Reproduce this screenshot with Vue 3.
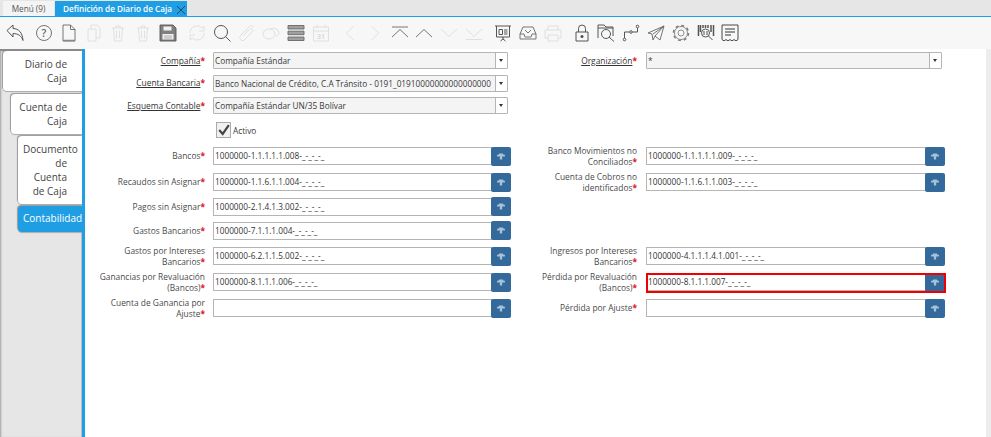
<script setup>
const rows = [
  {
    h: 26,
    left: { label: 'Bancos', value: '1000000-1.1.1.1.1.008-_-_-_-_' },
    right: { label: 'Banco Movimientos no Conciliados', value: '1000000-1.1.1.1.1.009-_-_-_-_' }
  },
  {
    h: 26,
    left: { label: 'Recaudos sin Asignar', value: '1000000-1.1.6.1.1.004-_-_-_-_' },
    right: { label: 'Cuenta de Cobros no identificados', value: '1000000-1.1.6.1.1.003-_-_-_-_' }
  },
  { h: 23, left: { label: 'Pagos sin Asignar', value: '1000000-2.1.4.1.3.002-_-_-_-_' } },
  { h: 25, left: { label: 'Gastos Bancarios', value: '1000000-7.1.1.1.004-_-_-_-_' } },
  {
    h: 26,
    left: { label: 'Gastos por Intereses Bancarios', value: '1000000-6.2.1.1.5.002-_-_-_-_' },
    right: { label: 'Ingresos por Intereses Bancarios', value: '1000000-4.1.1.1.4.1.001-_-_-_-_' }
  },
  {
    h: 26,
    left: { label: 'Ganancias por Revaluación (Bancos)', value: '1000000-8.1.1.1.006-_-_-_-_' },
    right: { label: 'Pérdida por Revaluación (Bancos)', value: '1000000-8.1.1.1.007-_-_-_-_', marked: true }
  },
  {
    h: 26,
    left: { label: 'Cuenta de Ganancia por Ajuste', value: '' },
    right: { label: 'Pérdida por Ajuste', value: '' }
  }
]
</script>

<template>
  <div class="page">
    <div class="tabs">
      <div class="tab">Menú (9)</div>
      <div class="tab active">
        Definición de Diario de Caja
        <svg class="close" viewBox="0 0 10 10"><path d="M1 1l8 8M9 1l-8 8" /></svg>
      </div>
    </div>

    <div class="toolbar">
      <div class="group">
        <svg class="ic strong" viewBox="0 0 18 18"><path d="M1 6.500L7 1v3.500c5.500 0 9.500 4 10 12-1.500-4.500-5-7-10-7V13z" /></svg>
      </div>
      <div class="group">
        <svg class="ic" viewBox="0 0 18 18"><circle cx="9" cy="9" r="7.500" /><text x="9" y="12.500" text-anchor="middle" class="q">?</text></svg>
        <svg class="ic" viewBox="0 0 18 18"><path d="M3 1h7.500L15 5.500V17H3z" /><path d="M10.500 1v4.500H15" /><path class="thick" d="M3 16.500h12" /></svg>
        <svg class="ic off" viewBox="0 0 18 18"><path d="M3 5h8v12H3zM6 5V1h6l3 3v10h-4" /></svg>
        <svg class="ic off" viewBox="0 0 18 18"><path d="M3 4h12M7 4V2h4v2M4.500 4l1 13h7l1-13M7.500 6.500v8M10.500 6.500v8" /></svg>
        <svg class="ic off" viewBox="0 0 18 18"><path d="M3 4h12M7 4V2h4v2M4.500 4l1 13h7l1-13M7.500 6.500v8M10.500 6.500v8" /></svg>
        <svg class="ic" viewBox="0 0 18 18"><path class="disk" d="M1 1h13l3 3v13H1z" /><path class="hole" d="M4.500 2.500h8v4h-8zM3.500 10h11v5.500h-11z" /><path class="thin" d="M5 12h8M5 14h8" /></svg>
      </div>
      <div class="group">
        <svg class="ic off" viewBox="0 0 18 18"><path d="M2 9a7 7 0 0 1 12-5l2-2v5h-5M16 9a7 7 0 0 1-12 5l-2 2v-5h5" /></svg>
        <svg class="ic strong" viewBox="0 0 18 18"><circle cx="8" cy="8" r="6.500" /><path d="M12.500 12.500l5 5" /></svg>
        <svg class="ic off" viewBox="0 0 18 18"><path d="M16 3c-2-2-4-1-5 0L3 11c-2 2-1 4 0 5s3 1 4-1l7-7c1-1 1-2 0-3s-2 0-3 1l-6 6" /></svg>
        <svg class="ic off" viewBox="0 0 18 18"><ellipse cx="7" cy="10" rx="6" ry="5" /><path d="M9 4.500a6 5 0 0 1 8 4c0 2-1 3-3 4" /></svg>
        <svg class="ic" viewBox="0 0 18 18"><path class="bar" d="M1 1.500h16v3.500H1zM1 7.200h16v3.500H1zM1 13h16v3.500H1z" /></svg>
        <svg class="ic off" viewBox="0 0 18 18"><path d="M1.500 3h15v14h-15zM1.500 7h15M5 1v3M13 1v3" /><text x="9" y="15" text-anchor="middle" class="cal">31</text></svg>
      </div>
      <div class="group">
        <svg class="ic off" viewBox="0 0 18 18"><path d="M12.500 2L5.500 9l7 7" /></svg>
        <svg class="ic off" viewBox="0 0 18 18"><path d="M5.500 2l7 7-7 7" /></svg>
        <svg class="ic" viewBox="0 0 18 18"><path d="M1 3h16M1 13l8-7.500L17 13" /></svg>
        <svg class="ic" viewBox="0 0 18 18"><path d="M1 13l8-7.500L17 13" /></svg>
        <svg class="ic off" viewBox="0 0 18 18"><path d="M1 5l8 7.500L17 5" /></svg>
        <svg class="ic off" viewBox="0 0 18 18"><path d="M1 5l8 7.500L17 5M1 15.500h16" /></svg>
      </div>
      <div class="group">
        <svg class="ic strong" viewBox="0 0 18 18"><path d="M1 2h16M2.500 2v11h13V2M9 13v2M6.500 17L9 15l2.500 2M5 5.500h3.500v5H5zM10 6h3.500M10 8h3.500M10 10h3.500" /></svg>
        <svg class="ic" viewBox="0 0 18 18"><path d="M4 3h10l3 7v5H1v-5zM1 10h4l1 3h6l1-3h4M6 6l3 3 3-3" /></svg>
        <svg class="ic off" viewBox="0 0 18 18"><path d="M4 6V2h10v4M4 14H1V6h16v8h-3M4 11h10v6H4z" /></svg>
      </div>
      <div class="group">
        <svg class="ic strong" viewBox="0 0 18 18"><path d="M3 8h12v9H3zM5.500 8V4.500a3.500 3.500 0 0 1 7 0V8" /><circle class="dot" cx="9" cy="12.500" r="1.500" /></svg>
        <svg class="ic strong" viewBox="0 0 18 18"><path d="M1 14V1h6l2 2h7v9M1 4h15" /><circle cx="9" cy="10" r="4.500" /><path d="M12 13l5 4.500" /></svg>
        <svg class="ic strong" viewBox="0 0 18 18"><circle cx="2.500" cy="15.500" r="1.300" /><circle cx="9" cy="8" r="1.300" /><circle cx="15.500" cy="2.500" r="1.300" /><path d="M2.500 14V8h5M10.500 8H15.500V4" /></svg>
        <svg class="ic" viewBox="0 0 18 18"><path d="M1 9l16-7-4 14-5-4-2 4-1-6zM6 10l11-8M8 12l9-10" /></svg>
        <svg class="ic gear" viewBox="0 0 18 18"><circle cx="9" cy="9" r="6.500" /><circle class="teeth" cx="9" cy="9" r="7.500" /><circle cx="9" cy="9" r="3" /></svg>
        <svg class="ic strong" viewBox="0 0 18 18"><path class="code" d="M1.500 1v11M3.500 1v7M6 1v3M8.500 1v3M11 1v3M14 1v7M16.500 1v11" /><circle cx="8.500" cy="9" r="4" /><path d="M7 7v4M10 7v4M11.500 12l4 4" /></svg>
        <svg class="ic dark" viewBox="0 0 18 18"><path d="M1 1h16v14.500c-1.500 1.500-2.500 1.500-4 0-1.500 1.500-2.500 1.500-4 0-1.500 1.500-2.500 1.500-4 0-1.500 1.500-2.500 1.500-4 0z" /><path class="lines" d="M4 5h10M4 8h10M4 11h6" /></svg>
      </div>
    </div>

    <div class="body">
      <div class="side">
        <div class="step s1">Diario de Caja</div>
        <div class="step s2">Cuenta de Caja</div>
        <div class="step s3">Documento de Cuenta de Caja</div>
        <div class="step s4">Contabilidad</div>
      </div>

      <div class="main">
        <div class="row r-select">
          <label class="lbl"><u>Compañía</u><i>*</i></label>
          <div class="select">Compañía Estándar<span class="arrow"></span></div>
          <label class="lbl"><u>Organización</u><i>*</i></label>
          <div class="select">*<span class="arrow"></span></div>
        </div>
        <div class="row r-select">
          <label class="lbl"><u>Cuenta Bancaria</u><i>*</i></label>
          <div class="select">Banco Nacional de Crédito, C.A Tránsito - 0191_01910000000000000000<span class="arrow"></span></div>
        </div>
        <div class="row r-select">
          <label class="lbl"><u>Esquema Contable</u><i>*</i></label>
          <div class="select">Compañía Estándar UN/35 Bolívar<span class="arrow"></span></div>
        </div>
        <div class="row r-check">
          <span></span>
          <div class="check">
            <span class="box"><svg viewBox="0 0 16 16"><path d="M2.500 8l4 4.500 7-10" /></svg></span>
            Activo
          </div>
        </div>

        <div v-for="row in rows" :key="row.left.label" class="row" :style="{ height: row.h + 'px' }">
          <label class="lbl">{{ row.left.label }}<i>*</i></label>
          <div class="field">
            <div class="input">{{ row.left.value }}</div>
            <button class="btn"><svg viewBox="0 0 9 8"><path d="M2.500 .5h4L7.500 2H9v2H5.800v3.500H3.200V4H0V2h1.500z" /></svg></button>
          </div>
          <template v-if="row.right">
            <label class="lbl">{{ row.right.label }}<i>*</i></label>
            <div class="field" :class="{ marked: row.right.marked }">
              <div class="input">{{ row.right.value }}</div>
              <button class="btn"><svg viewBox="0 0 9 8"><path d="M2.500 .5h4L7.500 2H9v2H5.800v3.500H3.200V4H0V2h1.500z" /></svg></button>
            </div>
          </template>
        </div>
      </div>
    </div>
  </div>
</template>

<style scoped>
.page {
  width: 991px;
  height: 437px;
  display: flex;
  flex-direction: column;
  overflow: hidden;
  background: #fff;
  font-family: "Open Sans", sans-serif;
  color: #3b3b3b;
}

.tabs {
  height: 15px;
  display: flex;
  padding: 1px 0 0 3px;
  background: #e6e6e6;
  border-bottom: 1px solid #1f9ee3;
  font-size: 8.200px;
}

.tab {
  width: 51px;
  line-height: 15px;
  text-align: center;
  background: #f4f4f4;
  color: #555;
}

.tab.active {
  width: 132px;
  margin-left: 1px;
  padding-left: 8px;
  box-sizing: border-box;
  text-align: left;
  background: #1f9ee3;
  color: #fff;
  font-weight: 600;
  position: relative;
}

.close {
  position: absolute;
  right: 1px;
  top: 4px;
  width: 10px;
  height: 10px;
  fill: none;
  stroke: #1c4a66;
  stroke-width: 1;
}

.toolbar {
  height: 32px;
  flex-shrink: 0;
  display: flex;
  align-items: center;
  gap: 11px;
  padding-left: 6px;
  background: #f7f7f7;
}

.group {
  display: flex;
  gap: 6.800px;
}

.ic {
  width: 18px;
  height: 18px;
  flex-shrink: 0;
  fill: none;
  stroke: #666;
  stroke-width: 0.900;
}

.ic.strong {
  stroke: #555;
  stroke-width: 1;
}

.ic.dark {
  stroke: #333;
}

.ic.gear {
  stroke: #808080;
}

.ic.off {
  stroke: #dcdcdc;
}

.ic .dot {
  fill: #4d4d4d;
  stroke: none;
}

.ic .thick {
  stroke-width: 1.500;
  stroke: #888;
}

.ic .disk {
  fill: #808080;
  stroke: #555;
}

.ic .hole {
  fill: #f0f0f0;
  stroke: none;
}

.ic .thin {
  stroke: #999;
  stroke-width: 0.800;
}

.ic .bar {
  fill: #a0a0a0;
  stroke: #666;
}

.ic .teeth {
  stroke-width: 1.600;
  stroke-dasharray: 3 2.890;
}

.ic .code {
  stroke-width: 1.500;
}

.ic .lines {
  stroke: #777;
  stroke-width: 1.600;
}

.ic .q {
  font-size: 10.500px;
  font-weight: 600;
  fill: #666;
  stroke: none;
}

.ic .cal {
  font-size: 7px;
  font-weight: 700;
  fill: #dcdcdc;
  stroke: none;
}

.body {
  flex: 1;
  display: flex;
  min-height: 0;
}

.side {
  width: 82px;
  flex-shrink: 0;
  box-sizing: border-box;
  background: #e6e6e6;
  border-top: 2px solid #8a8a8a;
  box-shadow: inset 2px 0 2px -1px #a0a0a0, inset -1px 0 0 #bdbdbd;
  padding-left: 3px;
  display: flex;
  flex-direction: column;
  font-size: 10px;
  line-height: 14px;
  overflow: hidden;
}

.step {
  box-sizing: border-box;
  background: #fff;
  border-radius: 4px 0 0 4px;
  box-shadow: -1px -1px 1px #999, 0 1px 1px #aaa;
  text-align: right;
  padding: 6px 15px 0 5px;
  color: #444;
}

.s1 {
  height: 40px;
}

.s2 {
  margin: 3px 0 0 8px;
  height: 40px;
}

.s3 {
  margin: 2px 0 0 15px;
  height: 68px;
}

.s4 {
  margin: 2px 0 0 15px;
  height: 26px;
  padding: 5px 0 0 5px;
  text-align: left;
  white-space: nowrap;
  background: #1f9ee3;
  color: #fff;
}

.main {
  flex: 1;
  min-width: 0;
  background: #fff;
  border-left: 3px solid #1f9ee3;
  border-right: 5px solid #ededed;
  font-size: 8.250px;
}

.row {
  display: grid;
  grid-template-columns: 120px 298px 119px 299px;
  column-gap: 8px;
  align-items: center;
}

.r-select {
  height: 22.700px;
}

.r-check {
  height: 26px;
}

.lbl {
  padding-left: 10px;
  text-align: right;
  font-size: 8.400px;
  line-height: 11.500px;
  color: #4a4a4a;
}

.lbl:nth-of-type(2) {
  padding-right: 1px;
}

.lbl u {
  color: #333;
}

.lbl i {
  color: #e0141c;
  font-style: normal;
  font-weight: 700;
}

.select,
.input {
  box-sizing: border-box;
  border: 1px solid #b5b5b5;
  padding-left: 1px;
  white-space: nowrap;
  overflow: hidden;
}

.select {
  position: relative;
  height: 17px;
  width: 295px;
  line-height: 15px;
  padding-right: 13px;
  background: #f4f4f4;
  border-radius: 1px;
  color: #3a3a3a;
}

.row:first-child .select:last-child {
  width: 296px;
}

.arrow {
  position: absolute;
  right: 0;
  top: 0;
  width: 11px;
  height: 15px;
  background: #fff;
  border-left: 1px solid #b5b5b5;
}

.arrow::after {
  content: "";
  position: absolute;
  left: 3px;
  top: 6px;
  border: 2.500px solid transparent;
  border-top: 3px solid #333;
  border-bottom-width: 0;
}

.check {
  display: flex;
  align-items: center;
  gap: 2px;
  padding-left: 3px;
}

.box {
  box-sizing: border-box;
  width: 15px;
  height: 16px;
  border: 1px solid #aaa;
  background: #f1f1f1;
}

.box svg {
  display: block;
  width: 14px;
  height: 14px;
  fill: none;
  stroke: #444;
  stroke-width: 2.500;
}

.field {
  display: flex;
  align-items: center;
  position: relative;
}

.input {
  flex: 1;
  height: 18px;
  line-height: 16px;
  background: #fff;
  color: #333;
  min-width: 0;
}

.btn {
  width: 20px;
  height: 19px;
  flex-shrink: 0;
  padding: 0;
  margin-left: -1px;
  border: none;
  border-radius: 2px;
  background: #336a9b;
  display: flex;
  align-items: center;
  justify-content: center;
}

.btn svg {
  width: 8px;
  height: 7px;
  fill: #a8c2d8;
}

.marked::after {
  content: "";
  position: absolute;
  inset: 0 -1px -1px 0;
  border: 2px solid #f00000;
  pointer-events: none;
}
</style>
